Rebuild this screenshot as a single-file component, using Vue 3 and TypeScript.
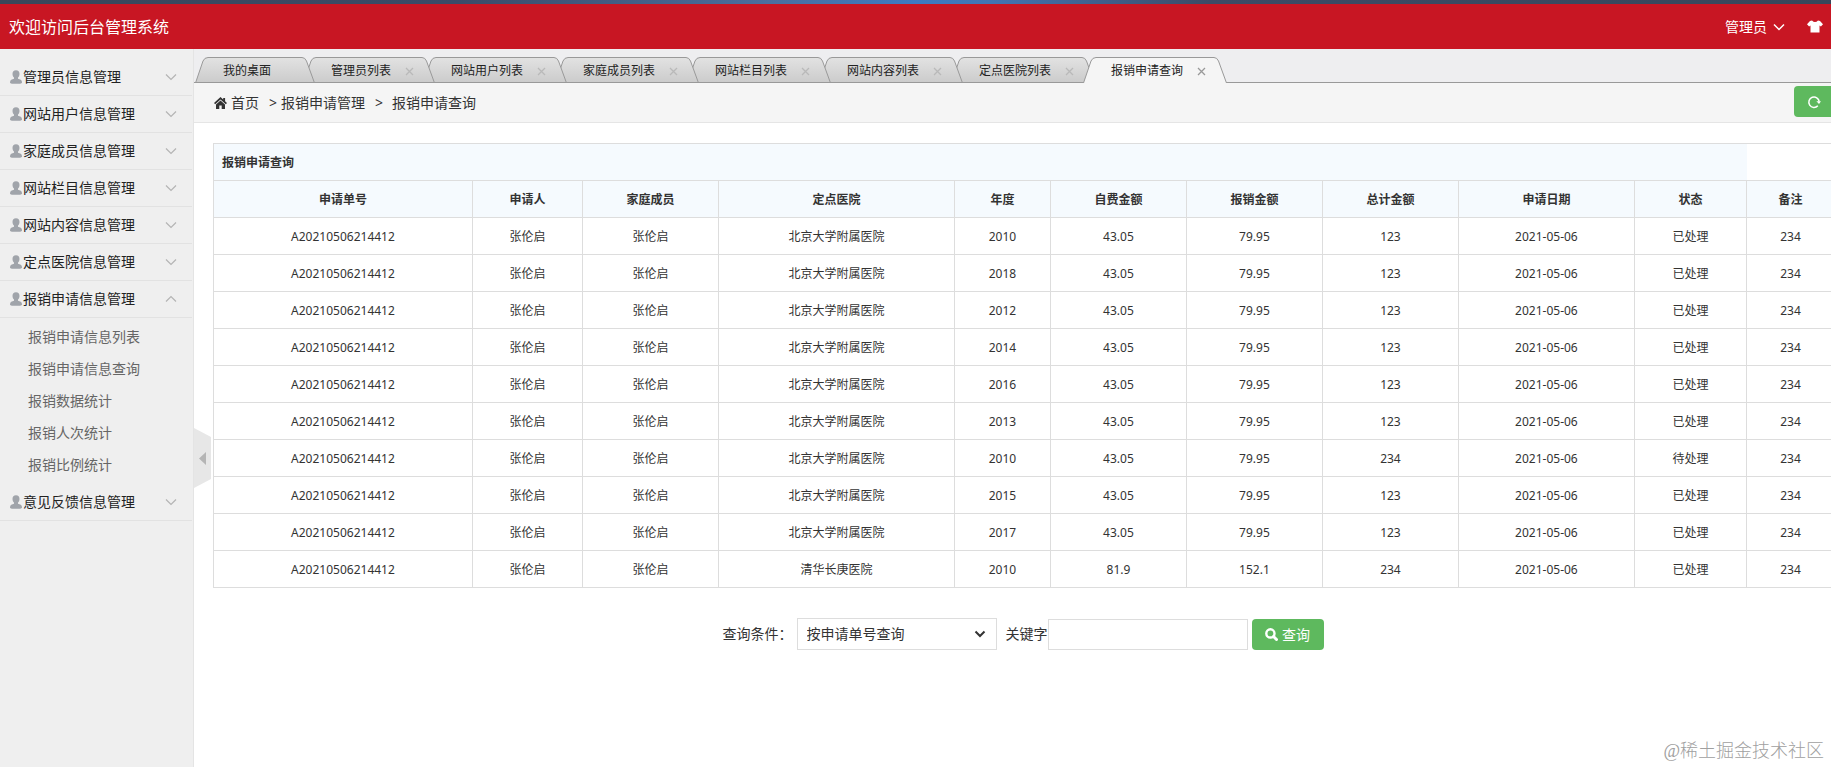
<script setup lang="ts">
import { ref } from 'vue'

interface MenuGroup {
  title: string
  children?: string[]
}

interface Claim {
  no: string
  applicant: string
  member: string
  hospital: string
  year: string
  own: string
  reimbursed: string
  total: string
  date: string
  state: string
  note: string
}

const menu: MenuGroup[] = [
  { title: '管理员信息管理' },
  { title: '网站用户信息管理' },
  { title: '家庭成员信息管理' },
  { title: '网站栏目信息管理' },
  { title: '网站内容信息管理' },
  { title: '定点医院信息管理' },
  {
    title: '报销申请信息管理',
    children: ['报销申请信息列表', '报销申请信息查询', '报销数据统计', '报销人次统计', '报销比例统计'],
  },
  { title: '意见反馈信息管理' },
]
const openGroup = ref(6)
const toggle = (i: number) => {
  openGroup.value = openGroup.value === i ? -1 : i
}

const tabs = ['我的桌面', '管理员列表', '网站用户列表', '家庭成员列表', '网站栏目列表', '网站内容列表', '定点医院列表', '报销申请查询']
const activeTab = ref(7)
// Each tab is its 12px label plus side space, and overlaps the next by 12px.
const tabWidth = (label: string) => label.length * 12 + 72
const tabOutline = (label: string) => {
  const w = tabWidth(label)
  return `M0.5 26 L8 4 Q9.5 0.5 13 0.5 H${w - 13} Q${w - 10} 0.5 ${w - 8.5} 4 L${w - 0.5} 26`
}

const columns = ['申请单号', '申请人', '家庭成员', '定点医院', '年度', '自费金额', '报销金额', '总计金额', '申请日期', '状态', '备注']

const claim = (year: string, extra: Partial<Claim> = {}): Claim => ({
  no: 'A20210506214412',
  applicant: '张伦启',
  member: '张伦启',
  hospital: '北京大学附属医院',
  year,
  own: '43.05',
  reimbursed: '79.95',
  total: '123',
  date: '2021-05-06',
  state: '已处理',
  note: '234',
  ...extra,
})
const claims: Claim[] = [
  claim('2010'),
  claim('2018'),
  claim('2012'),
  claim('2014'),
  claim('2016'),
  claim('2013'),
  claim('2010', { total: '234', state: '待处理' }),
  claim('2015'),
  claim('2017'),
  claim('2010', { hospital: '清华长庚医院', own: '81.9', reimbursed: '152.1', total: '234' }),
]
const keyword = ref('')
</script>

<template>
  <div class="page">
    <header class="top">
      <h1>欢迎访问后台管理系统</h1>
      <div class="top-right">
        <button type="button" class="user">
          管理员
          <svg width="12" height="8" viewBox="0 0 12 8"><path d="M1 1.5 6 6.5 11 1.5" fill="none" stroke="#fff" stroke-width="1.5" /></svg>
        </button>
        <button type="button" class="skin" aria-label="换肤">
          <svg width="16" height="13" viewBox="0 0 16 13"><path d="M5 0.5 Q8 3.6 11 0.5 L13 1 16 4.3 13.9 6.5 12.5 5.5 V12.5 H3.5 V5.5 L2.1 6.5 0 4.3 3 1Z" fill="#fff" /></svg>
        </button>
      </div>
    </header>

    <div class="body">
      <aside class="side">
        <nav>
          <div v-for="(g, i) in menu" :key="g.title">
            <button type="button" class="group" :aria-expanded="openGroup === i" @click="toggle(i)">
              <svg class="person" width="12" height="14" viewBox="0 0 12 14"><path d="M6 0.2C8.3 0.2 9.6 1.8 9.5 4 9.4 5.8 8.8 6.9 8 7.6V8.8C10 9.2 12 10.1 12 12.2 12 13.5 11 13.8 6 13.8S0 13.5 0 12.2C0 10.1 2 9.2 4 8.8V7.6C3.2 6.9 2.6 5.8 2.5 4 2.4 1.8 3.7 0.2 6 0.2Z" fill="#a0a4aa" /></svg>
              <span>{{ g.title }}</span>
              <svg class="arrow" :class="{ up: openGroup === i }" width="12" height="8" viewBox="0 0 12 8"><path d="M1 1.5 6 6.5 11 1.5" fill="none" stroke="#b4b4b4" stroke-width="1.2" /></svg>
            </button>
            <ul v-if="g.children && openGroup === i">
              <li v-for="c in g.children" :key="c"><a href="#">{{ c }}</a></li>
            </ul>
          </div>
        </nav>
        <button type="button" class="handle" aria-label="收起菜单">
          <svg width="17" height="60" viewBox="0 0 17 60"><path d="M0 0 17 9V51L0 60Z" fill="#e7e7e7" /><path d="M12 24V37L5 30.5Z" fill="#b5b5b5" /></svg>
        </button>
      </aside>

      <main>
        <svg class="defs" width="0" height="0"><defs><linearGradient id="tabfill" x1="0" y1="0" x2="0" y2="1"><stop offset="0" stop-color="#e2e2e2" /><stop offset="1" stop-color="#cbcbcb" /></linearGradient></defs></svg>
        <ul class="tabs">
          <li v-for="(t, i) in tabs" :key="t" :class="{ active: activeTab === i }" :style="{ width: tabWidth(t) + 'px', zIndex: activeTab === i ? 20 : 10 - i }">
            <svg class="shape" :width="tabWidth(t)" :height="activeTab === i ? 26 : 25">
              <path :d="tabOutline(t)" :fill="activeTab === i ? '#f5f5f5' : 'url(#tabfill)'" stroke="#999" />
            </svg>
            <button type="button" class="tab" @click="activeTab = i">{{ t }}</button>
            <button v-if="i > 0" type="button" class="close" aria-label="关闭">
              <svg width="9" height="9" viewBox="0 0 9 9"><path d="M1 1 8 8M8 1 1 8" fill="none" stroke="currentColor" stroke-width="1.3" /></svg>
            </button>
          </li>
        </ul>

        <div class="crumbs">
          <svg width="13" height="12" viewBox="0 0 13 12"><path d="M6.5 0 0 5.9 1.2 7.2 6.5 2.5 11.8 7.2 13 5.9 11.1 4.2V1H9.2V2.5Z M6.5 3.5 2 7.4V12H5.3V8.4H7.7V12H11V7.4Z" fill="#333" /></svg>
          <a href="#">首页</a><span class="sep">&gt;</span><span>报销申请管理</span><span class="sep wide">&gt;</span><span>报销申请查询</span>
          <button type="button" class="refresh" aria-label="刷新">
            <svg width="14" height="14" viewBox="0 0 14 14"><path d="M10.8 10.8A5.2 5.2 0 1 1 12.2 6.6" fill="none" stroke="#fff" stroke-width="1.5" /><path d="M9.4 6.2H14L12 9Z" fill="#fff" /></svg>
          </button>
        </div>

        <div class="content">
          <table>
            <colgroup>
              <col />
              <col class="c110" /><col class="c136" /><col class="c236" /><col class="c96" />
              <col class="c136" /><col class="c136" /><col class="c136" /><col class="c176" />
              <col class="c112" /><col class="c88" />
            </colgroup>
            <thead>
              <tr><th class="title" colspan="10" scope="colgroup">报销申请查询</th></tr>
              <tr><th v-for="c in columns" :key="c" scope="col">{{ c }}</th></tr>
            </thead>
            <tbody>
              <tr v-for="(r, i) in claims" :key="i">
                <td>{{ r.no }}</td>
                <td>{{ r.applicant }}</td>
                <td>{{ r.member }}</td>
                <td>{{ r.hospital }}</td>
                <td>{{ r.year }}</td>
                <td>{{ r.own }}</td>
                <td>{{ r.reimbursed }}</td>
                <td>{{ r.total }}</td>
                <td>{{ r.date }}</td>
                <td>{{ r.state }}</td>
                <td>{{ r.note }}</td>
              </tr>
            </tbody>
          </table>

          <form @submit.prevent>
            <label for="field">查询条件：</label>
            <span class="select">
              <select id="field"><option>按申请单号查询</option></select>
              <svg width="12" height="8" viewBox="0 0 12 8"><path d="M1.5 1.5 6 6 10.5 1.5" fill="none" stroke="#333" stroke-width="2" /></svg>
            </span>
            <label for="keyword">关键字</label>
            <input id="keyword" v-model="keyword" type="text" />
            <button type="submit" class="search">
              <svg width="13" height="13" viewBox="0 0 13 13"><circle cx="5.4" cy="5.4" r="4.1" fill="none" stroke="#fff" stroke-width="2.4" /><path d="M8.5 8.5 11.5 11.5" stroke="#fff" stroke-width="3" stroke-linecap="round" /></svg>
              查询
            </button>
          </form>
        </div>
      </main>
    </div>
    <div class="mark">@稀土掘金技术社区</div>
  </div>
</template>

<style>
body {
  margin: 0;
}
</style>

<style scoped>
.page {
  position: relative;
  display: flex;
  flex-direction: column;
  min-height: 100vh;
  overflow: hidden;
  background: #fff;
  color: #333;
  font: 14px/20px "Noto Sans", "Noto Sans CJK SC", sans-serif;
}
* {
  box-sizing: border-box;
}
button {
  margin: 0;
  padding: 0;
  border: 0;
  background: none;
  color: inherit;
  font: inherit;
  cursor: pointer;
}
ul {
  margin: 0;
  padding: 0;
  list-style: none;
}
a {
  color: inherit;
  text-decoration: none;
}
svg {
  display: block;
  flex: none;
}
.top::before {
  content: "";
  position: absolute;
  inset: 0 0 auto;
  height: 4px;
  background: linear-gradient(90deg, #38475a 0, #3a4b68 25%, #4a6f9f 42%, #3d7ac2 50%, #4275b4 54%, #3c4b66 66%, #37475b 100%);
}
.top {
  display: flex;
  align-items: center;
  justify-content: space-between;
  height: 49px;
  padding: 4px 8px 0 9px;
  background: #c81623;
  color: #fff;
}
h1 {
  margin: 0;
  font-size: 16px;
  font-weight: 400;
  line-height: 24px;
}
.top-right,
.user {
  display: flex;
  align-items: center;
}
.top-right {
  gap: 22px;
}
.user {
  gap: 6px;
}
.body {
  display: flex;
  flex: 1;
}
.side {
  position: relative;
  flex: none;
  width: 194px;
  padding-top: 10px;
  border-right: 1px solid #e4e4e4;
  background: #efefef;
}
.group {
  display: flex;
  align-items: center;
  gap: 1px;
  width: 192px;
  height: 37px;
  padding: 0 15px 0 10px;
  border-bottom: 1px solid #e2e2e2;
  color: #222;
}
.arrow {
  margin-left: auto;
}
.arrow.up {
  transform: rotate(180deg);
}
.side ul {
  padding: 3px 0;
  color: #666;
}
.side li {
  padding-left: 28px;
  line-height: 32px;
}
.handle {
  position: absolute;
  top: 379px;
  left: 194px;
}
main {
  flex: 1;
  min-width: 0;
}
.defs {
  position: absolute;
}
.tabs {
  position: relative;
  z-index: 0;
  display: flex;
  height: 34px;
  padding: 8px 0 0 1px;
  border-bottom: 1px solid #999;
  background: #eeeef0;
}
.tabs li {
  position: relative;
  display: flex;
  align-items: center;
  flex: none;
  height: 26px;
  margin-right: -12px;
  padding: 2px 0 0 28px;
  font-size: 12px;
  color: #222;
}
.shape {
  position: absolute;
  top: 0;
  left: 0;
}
.tab,
.close {
  position: relative;
}
.close {
  margin-left: 14px;
  color: #b9b9b9;
}
.active .close {
  color: #999;
}
.crumbs {
  display: flex;
  align-items: center;
  height: 40px;
  padding-left: 20px;
  border-bottom: 1px solid #e5e5e5;
  background: #f5f5f5;
}
.crumbs a {
  margin-left: 4px;
}
.sep {
  margin: 0 4px 0 10px;
}
.sep.wide {
  margin-right: 9px;
}
.refresh {
  display: flex;
  align-items: center;
  width: 37px;
  height: 31px;
  margin: 0 0 2px auto;
  padding-left: 13px;
  border-radius: 4px 0 0 4px;
  background: #5eb95e;
}
.content {
  padding: 20px 0 0 19px;
  overflow: hidden;
}
table {
  width: 100%;
  min-width: 1622px;
  border-collapse: collapse;
  table-layout: fixed;
  border: 1px solid #ddd;
  font-size: 12px;
}
.c88 {
  width: 88px;
}
.c96 {
  width: 96px;
}
.c110 {
  width: 110px;
}
.c112 {
  width: 112px;
}
.c136 {
  width: 136px;
}
.c176 {
  width: 176px;
}
.c236 {
  width: 236px;
}
th,
td {
  height: 37px;
  padding: 9px 8px 7px;
  border: 1px solid #ddd;
  text-align: center;
}
th {
  background: #f5fafe;
}
th.title {
  border-right: 0;
  text-align: left;
}
form {
  display: flex;
  align-items: center;
  justify-content: center;
  width: 100%;
  min-width: 1620px;
  margin-top: 30px;
}
.select {
  position: relative;
  margin: 0 9px 0 4px;
}
.select svg {
  position: absolute;
  top: 12px;
  right: 11px;
  pointer-events: none;
}
select,
input {
  display: block;
  width: 200px;
  height: 32px;
  margin: 0;
  padding: 0 9px;
  border: 1px solid #ddd;
  border-radius: 0;
  background: #fff;
  color: #333;
  font: inherit;
  appearance: none;
}
input {
  height: 31px;
}
input,
.search {
  align-self: flex-end;
}
.search {
  display: flex;
  align-items: center;
  justify-content: center;
  gap: 4px;
  width: 72px;
  height: 31px;
  margin-left: 4px;
  border-radius: 4px;
  background: #5eb95e;
  color: #fff;
}
.mark {
  position: absolute;
  right: 7px;
  bottom: 3px;
  color: #a0a0a0;
  font: 300 18px/26px "Liberation Serif", "Noto Sans CJK SC", serif;
}
</style>
